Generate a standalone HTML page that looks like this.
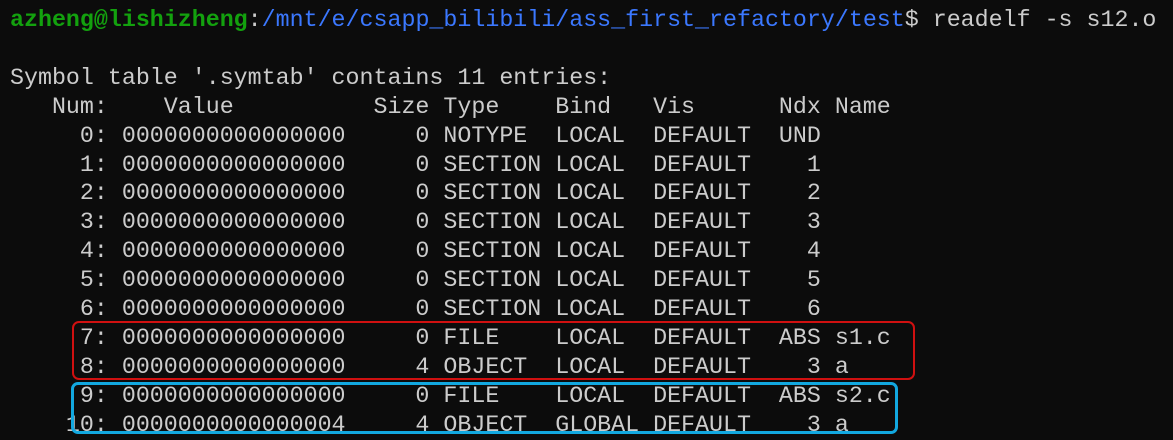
<!DOCTYPE html>
<html><head><meta charset="utf-8"><style>
html,body{margin:0;padding:0;background:#0c0c0c;width:1173px;height:436px;overflow:hidden}
pre{margin:0;position:absolute;left:10px;top:6px;font-family:"Liberation Mono","DejaVu Sans Mono",monospace;font-size:23.3px;line-height:28.9px;color:#cccccc}
.g{color:#13a10e;font-weight:bold}.b{color:#3b78ff}
.box{position:absolute;border-radius:7px;box-sizing:border-box}
</style></head><body>
<pre><span class="g">azheng@lishizheng</span>:<span class="b">/mnt/e/csapp_bilibili/ass_first_refactory/test</span>$ readelf -s s12.o

Symbol table '.symtab' contains 11 entries:
   Num:    Value          Size Type    Bind   Vis      Ndx Name
     0: 0000000000000000     0 NOTYPE  LOCAL  DEFAULT  UND
     1: 0000000000000000     0 SECTION LOCAL  DEFAULT    1
     2: 0000000000000000     0 SECTION LOCAL  DEFAULT    2
     3: 0000000000000000     0 SECTION LOCAL  DEFAULT    3
     4: 0000000000000000     0 SECTION LOCAL  DEFAULT    4
     5: 0000000000000000     0 SECTION LOCAL  DEFAULT    5
     6: 0000000000000000     0 SECTION LOCAL  DEFAULT    6
     7: 0000000000000000     0 FILE    LOCAL  DEFAULT  ABS s1.c
     8: 0000000000000000     4 OBJECT  LOCAL  DEFAULT    3 a
     9: 0000000000000000     0 FILE    LOCAL  DEFAULT  ABS s2.c
    10: 0000000000000004     4 OBJECT  GLOBAL DEFAULT    3 a</pre>
<div class="box" style="left:72px;top:321px;width:843px;height:59px;border:2px solid #d01010"></div>
<div class="box" style="left:71px;top:382px;width:827px;height:52px;border:3px solid #12a8e0"></div>
</body></html>
